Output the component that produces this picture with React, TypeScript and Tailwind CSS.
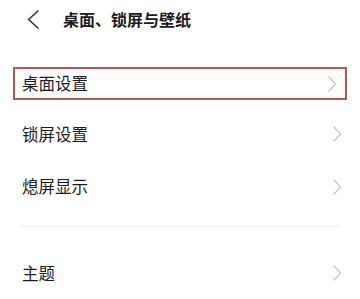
import React from "react";

const font = { fontFamily: '"Noto Sans CJK SC", "Noto Sans", sans-serif' };

function Chevron() {
  return (
    <svg width="10" height="16" viewBox="0 0 10 16" className="shrink-0">
      <polyline points="2,1 8.5,8 2,15" fill="none" stroke="#c6c6c6" strokeWidth="1.3" strokeLinecap="round" strokeLinejoin="round" />
    </svg>
  );
}

function Row({ label, h }: { label: string; h: string }) {
  return (
    <div className={`flex items-center justify-between pl-[22px] pr-[18px] ${h}`}>
      <span className="text-[16.5px] leading-none text-[#1c1c1c]">{label}</span>
      <Chevron />
    </div>
  );
}

export default function App() {
  return (
    <div className="w-[360px] h-[299px] overflow-hidden bg-white flex flex-col" style={font}>
      <div className="h-[44px] flex items-center pl-[27px]">
        <svg width="13" height="19" viewBox="0 0 13 19" className="shrink-0">
          <polyline points="11,1 1.5,9.5 11,18" fill="none" stroke="#333" strokeWidth="1.6" strokeLinecap="round" strokeLinejoin="round" />
        </svg>
        <span className="ml-[23px] text-[16px] leading-none font-semibold text-[#1c1c1c]">桌面、锁屏与壁纸</span>
      </div>
      <div className="mt-[29px] mx-[13px] h-[37px] border-2 border-[#a65c5c] flex items-center justify-between pl-[7px] pr-[8px] shadow-[inset_0_0_2px_rgba(200,120,120,0.4)]">
        <span className="text-[16.5px] leading-none text-[#1c1c1c]">桌面设置</span>
        <Chevron />
      </div>
      <div className="mt-[8px]">
        <Row label="锁屏设置" h="h-[52px]" />
        <Row label="熄屏显示" h="h-[53px]" />
      </div>
      <div className="mt-[13px] mx-[20px] h-px bg-[#f0f0f0]" />
      <div className="mt-[20px]">
        <Row label="主题" h="h-[52px]" />
      </div>
    </div>
  );
}
